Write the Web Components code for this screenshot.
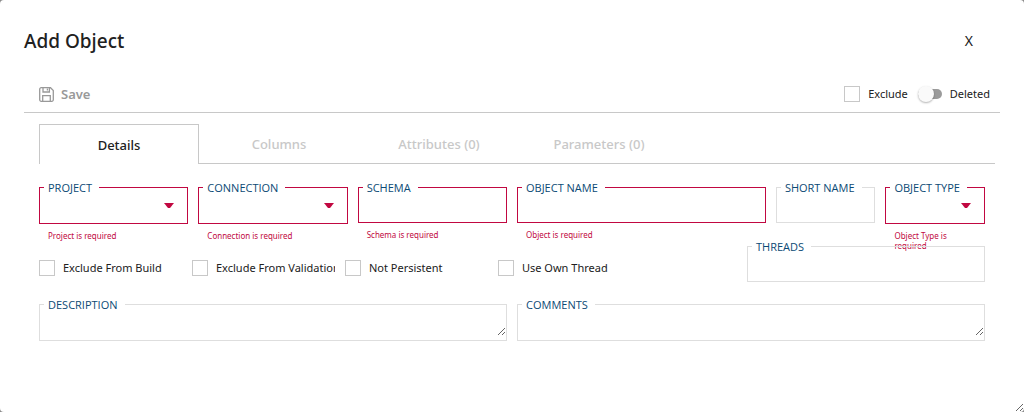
<!DOCTYPE html>
<html lang="en">
<head>
<meta charset="utf-8">
<meta name="viewport" content="width=device-width, initial-scale=1">
<title>Add Object</title>
<style>
  html { background: #8a8a8a; }
  body {
    margin: 0;
    font-family: "Noto Sans", "Open Sans", sans-serif;
    color: #212121;
    --line: #c8c8c8;
    --line-soft: #dedede;
    --error: #c10841;
    --label: #0b4a75;
  }
</style>
</head>
<body>
<object-dialog></object-dialog>

<script>
const define = (name, html, setup) => {
  const template = document.createElement('template');
  template.innerHTML = html;
  customElements.define(name, class extends HTMLElement {
    constructor() {
      super();
      this.attachShadow({ mode: 'open' }).append(template.content.cloneNode(true));
    }
    connectedCallback() {
      if (setup && !this.ready) { this.ready = true; setup(this, this.shadowRoot); }
    }
  });
};

/* Outlined field: kind = text | select | area */
define('outlined-field', `
  <style>
    :host { display: block; min-width: 0; --edge: var(--line-soft); }
    :host([error]) { --edge: var(--error); }
    .box { position: relative; display: grid; border: 1px solid var(--edge); height: 34px; }
    :host([kind="select"]) .box, :host([kind="area"]) .box { height: 35px; }
    label {
      position: absolute; left: 4px; top: -8px; padding: 0 7px 0 4px;
      background: #fff; color: var(--label);
      font-family: "Open Sans", sans-serif; font-size: 11px; line-height: 16px; white-space: nowrap;
    }
    input, select, textarea {
      grid-area: 1 / 1; box-sizing: border-box; width: 100%; min-width: 0; margin: 0; border: 0; outline: 0;
      padding: 8px; background: transparent; font: inherit; font-size: 12px; color: inherit;
      border-radius: 0; appearance: none;
    }
    textarea { height: 31px; min-height: 31px; resize: vertical; overflow: hidden; }
    svg { grid-area: 1 / 1; place-self: center end; margin-right: 13px; pointer-events: none; fill: var(--error); }
    .error { margin: 7px 9px 0; height: 10px; font-size: 8px; line-height: 10px; color: var(--error); position: relative; }
    .error:empty { display: none; }
  </style>
  <div class="box"><label for="control"></label></div>
  <div class="error" id="error"></div>`,
  (host, root) => {
    const kind = host.getAttribute('kind');
    const box = root.querySelector('.box');
    const control = document.createElement(kind === 'select' ? 'select' : kind === 'area' ? 'textarea' : 'input');
    control.id = 'control';
    box.prepend(control);
    if (kind === 'select') {
      box.insertAdjacentHTML('beforeend',
        '<svg width="10" height="5" viewBox="0 0 10 5" aria-hidden="true"><path d="M0 0h10L6 5H4z"/></svg>');
    }
    root.querySelector('label').textContent = host.getAttribute('label');
    if (host.hasAttribute('error')) {
      root.querySelector('.error').textContent = host.getAttribute('error');
      control.setAttribute('aria-invalid', 'true');
      control.setAttribute('aria-describedby', 'error');
    }
  });

define('check-box', `
  <style>
    :host { display: block; min-width: 0; overflow: hidden; }
    label { display: flex; align-items: center; gap: 8px; font-size: 11px; line-height: 18px; white-space: nowrap; }
    input { appearance: none; flex: none; box-sizing: border-box; width: 16px; height: 16px; margin: 0; border: 1px solid var(--line); background: #fff; }
    input:checked { background: var(--label); }
  </style>
  <label><input type="checkbox"><span><slot></slot></span></label>`);

define('toggle-switch', `
  <style>
    :host { display: block; }
    label { display: flex; align-items: center; gap: 8px; font-size: 11px; line-height: 18px; white-space: nowrap; }
    input { appearance: none; display: flex; align-items: center; width: 24px; height: 10px; margin: 0; border-radius: 5px; background: #9b9b9b; }
    input::before { content: ""; width: 16px; height: 16px; border-radius: 50%; background: #fafafa; box-shadow: 0 1px 2px rgba(0,0,0,.3); }
    input:checked { justify-content: flex-end; }
  </style>
  <label><input type="checkbox" role="switch"><span><slot></slot></span></label>`);

define('save-button', `
  <style>
    :host { display: block; }
    button { display: flex; align-items: center; gap: 7px; padding: 0; border: 0; background: none; color: #999; font-family: inherit; font-size: 13px; font-weight: 600; line-height: 18px; }
    svg { fill: none; stroke: currentColor; }
  </style>
  <button type="button">
    <svg width="15" height="15" viewBox="0 0 15 15" stroke-width="1.3" aria-hidden="true">
      <path d="M2.2.7h9.3l2.8 2.8v9.3a1.5 1.5 0 0 1-1.5 1.5H2.2a1.5 1.5 0 0 1-1.5-1.5V2.2A1.5 1.5 0 0 1 2.2.7z"/>
      <path d="M4 .8v4.2h6.4V.8M8.4 1.4v2M3.7 14V8.6h7.6V14"/>
    </svg>
    <slot></slot>
  </button>`);

define('tab-strip', `
  <style>
    :host { display: flex; border-bottom: 1px solid var(--line); height: 39px; }
    ::slotted(button) {
      box-sizing: border-box; width: 160px; height: 39px; padding: 0; border: 0; background: none;
      color: #c8c8c8; font-family: inherit; font-size: 13px; font-weight: 500; line-height: 18px;
    }
    ::slotted(button[aria-selected="true"]) {
      height: 40px; border: 1px solid var(--line); border-bottom: 0; background: #fff; color: #212121;
    }
  </style>
  <slot></slot>`,
  host => host.setAttribute('role', 'tablist'));

define('object-form', `
  <style>
    :host { display: block; padding: 0 10px 0 0; }
    .halves { display: grid; grid-template-columns: 1fr 1fr; gap: 10px; }
    .thirds { display: grid; grid-template-columns: repeat(3, 1fr); gap: 10px; }
    .names { display: grid; grid-template-columns: 5fr 2fr 2fr; gap: 10px; }
    .options { display: grid; grid-template-columns: repeat(4, 143fr) 86fr 238fr; gap: 10px; align-items: center; margin: 5px 0 22px; }
    .options outlined-field { grid-column: 6; }
    check-box { padding-top: 8px; }
  </style>
  <div class="halves">
    <div class="thirds">
      <outlined-field kind="select" label="PROJECT" error="Project is required"></outlined-field>
      <outlined-field kind="select" label="CONNECTION" error="Connection is required"></outlined-field>
      <outlined-field kind="text" label="SCHEMA" error="Schema is required"></outlined-field>
    </div>
    <div class="names">
      <outlined-field kind="text" label="OBJECT NAME" error="Object is required"></outlined-field>
      <outlined-field kind="text" label="SHORT NAME"></outlined-field>
      <outlined-field kind="select" label="OBJECT TYPE" error="Object Type is required"></outlined-field>
    </div>
  </div>
  <div class="options">
    <check-box>Exclude From Build</check-box>
    <check-box>Exclude From Validation</check-box>
    <check-box>Not Persistent</check-box>
    <check-box>Use Own Thread</check-box>
    <outlined-field kind="text" label="THREADS"></outlined-field>
  </div>
  <div class="halves">
    <outlined-field kind="area" label="DESCRIPTION"></outlined-field>
    <outlined-field kind="area" label="COMMENTS"></outlined-field>
  </div>`);

define('object-dialog', `
  <style>
    :host { display: block; box-sizing: border-box; min-height: 100vh; padding: 24px; background: #fff; border-radius: 4px; overflow: hidden; resize: both; }
    header { display: flex; justify-content: space-between; align-items: center; height: 34px; padding-right: 27px; }
    h1 { margin: 0; font-size: 19px; line-height: 28px; font-weight: 500; }
    .close { padding: 0; border: 0; background: none; font-family: inherit; font-size: 14px; line-height: 18px; color: #212121; }
    .toolbar { display: flex; align-items: center; margin-top: 18px; height: 36px; padding: 0 10px 0 15px; border-bottom: 1px solid var(--line); }
    .toolbar save-button { margin-right: auto; }
    .toolbar toggle-switch { margin-left: 10px; }
    .body { padding: 11px 5px 0 15px; }
    object-form { margin-top: 23px; }
  </style>
  <header>
    <h1>Add Object</h1>
    <button class="close" type="button" aria-label="Close">X</button>
  </header>
  <div class="toolbar">
    <save-button>Save</save-button>
    <check-box>Exclude</check-box>
    <toggle-switch>Deleted</toggle-switch>
  </div>
  <div class="body">
    <tab-strip>
      <button type="button" role="tab" aria-selected="true">Details</button>
      <button type="button" role="tab" aria-selected="false">Columns</button>
      <button type="button" role="tab" aria-selected="false">Attributes (0)</button>
      <button type="button" role="tab" aria-selected="false">Parameters (0)</button>
    </tab-strip>
    <object-form></object-form>
  </div>`);
</script>
</body>
</html>
